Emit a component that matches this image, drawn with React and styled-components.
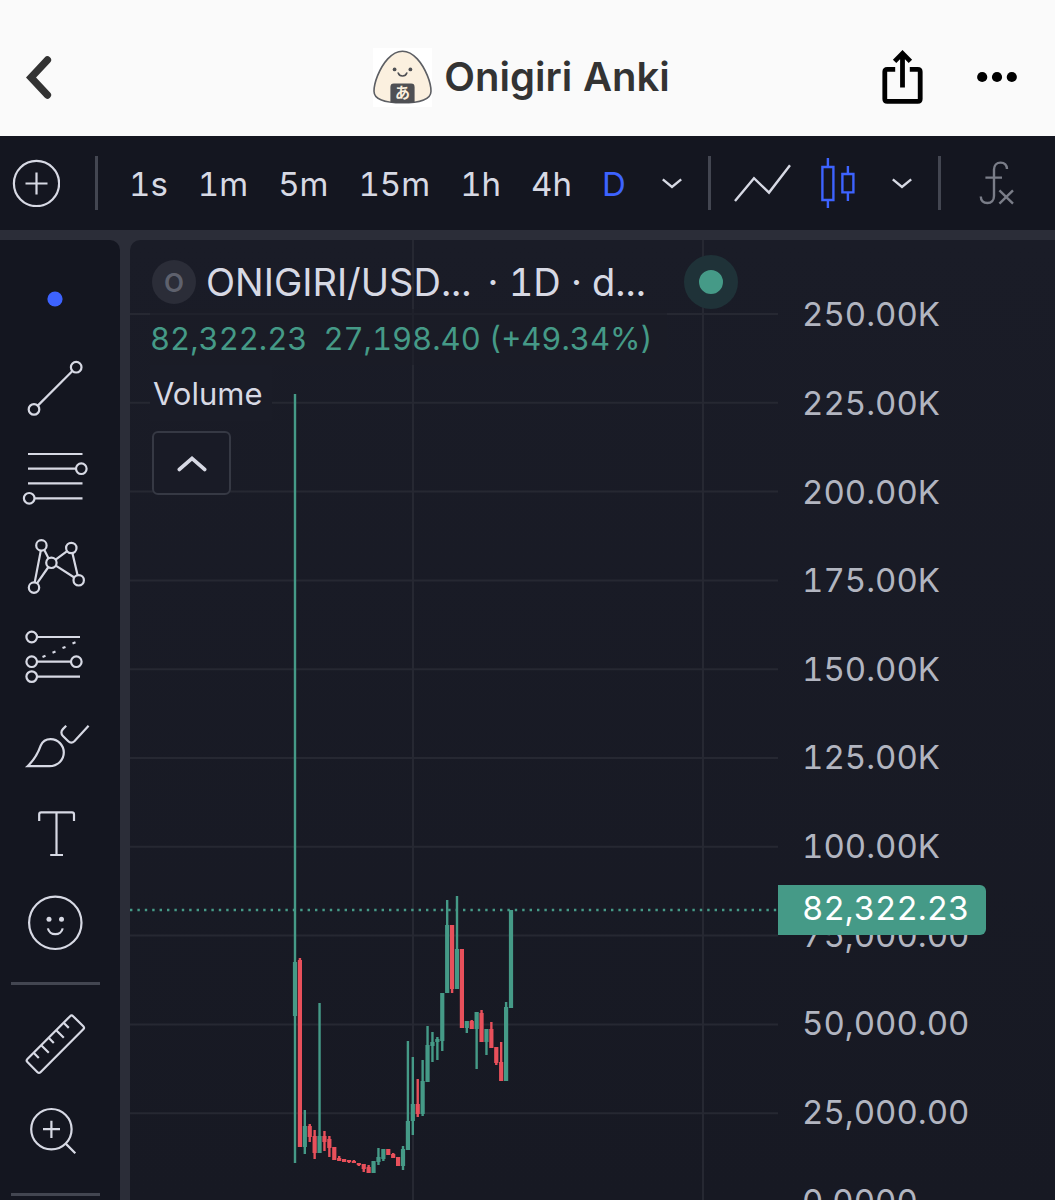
import styled, { createGlobalStyle } from "styled-components";

const colors = {
  page: "#fafafa",
  toolbar: "#141620",
  frame: "#2b2d38",
  text: "#d7d9e4",
  axis: "#b2b5c0",
  muted: "#7a7d88",
  line: "#434651",
  blue: "#3d63ff",
  green: "#459a87",
  red: "#e8505b",
};

const GRID_TOP = 74;
const GRID_STEP = 89;
const CANDLE_START = 165;
const CANDLE_END = 381;
const LAST_PRICE_Y = 670;

const intervals = ["1s", "1m", "5m", "15m", "1h", "4h", "D"];

const priceLabels = [
  "250.00K",
  "225.00K",
  "200.00K",
  "175.00K",
  "150.00K",
  "125.00K",
  "100.00K",
  "75,000.00",
  "50,000.00",
  "25,000.00",
  "0.0000",
];

// [direction, high, body top, body bottom, low]
const candles = [
  ["up", 154, 722, 776, 923],
  ["down", 718, 720, 907, 907],
  ["up", 870, 886, 907, 914],
  ["down", 884, 886, 897, 902],
  ["down", 890, 896, 913, 919],
  ["up", 763, 896, 913, 913],
  ["down", 891, 896, 902, 911],
  ["down", 896, 899, 908, 917],
  ["down", 907, 907, 920, 920],
  ["down", 916, 918, 921, 921],
  ["down", 919, 919, 922, 922],
  ["down", 920, 920, 922, 923],
  ["down", 920, 921, 923, 923],
  ["down", 923, 923, 925, 926],
  ["down", 924, 924, 929, 932],
  ["down", 925, 927, 933, 933],
  ["up", 921, 921, 933, 933],
  ["up", 908, 917, 922, 925],
  ["up", 909, 909, 919, 921],
  ["down", 909, 909, 915, 915],
  ["down", 913, 914, 918, 918],
  ["down", 917, 917, 926, 926],
  ["up", 906, 909, 926, 930],
  ["up", 801, 881, 910, 910],
  ["up", 817, 864, 881, 895],
  ["down", 839, 864, 874, 877],
  ["up", 820, 841, 874, 876],
  ["up", 786, 805, 842, 842],
  ["up", 792, 802, 806, 822],
  ["up", 797, 799, 802, 820],
  ["up", 753, 753, 801, 811],
  ["up", 660, 685, 753, 753],
  ["down", 685, 685, 749, 753],
  ["up", 656, 709, 749, 749],
  ["down", 709, 709, 788, 788],
  ["up", 781, 781, 788, 793],
  ["down", 780, 781, 789, 789],
  ["up", 772, 772, 789, 829],
  ["down", 770, 773, 802, 802],
  ["up", 789, 789, 802, 815],
  ["down", 782, 789, 808, 808],
  ["down", 807, 807, 823, 825],
  ["down", 802, 822, 841, 841],
  ["up", 762, 767, 841, 841],
  ["up", 670, 670, 768, 768],
];

const drawingTools = [
  {
    label: "Cursor",
    icon: <circle cx="55" cy="44" r="7.6" fill={colors.blue} stroke="none" />,
  },
  {
    label: "Trend line",
    icon: (
      <>
        <circle cx="76.2" cy="23.2" r="5.3" />
        <circle cx="34" cy="65.4" r="5.3" />
        <path d="M72.4 27 37.8 61.6" />
      </>
    ),
  },
  {
    label: "Fib retracement",
    icon: (
      <>
        <path d="M28 21H82.5M28 35.7H76M28 50.4H82.5M34.5 65.3H82.5" />
        <circle cx="81.3" cy="35.7" r="5.3" />
        <circle cx="29.2" cy="65.3" r="5.3" />
      </>
    ),
  },
  {
    label: "Pattern",
    icon: (
      <>
        <circle cx="41.4" cy="23.4" r="5.2" />
        <circle cx="71.3" cy="26" r="5.2" />
        <circle cx="51.4" cy="40.8" r="5.2" />
        <circle cx="78.7" cy="58.3" r="5.2" />
        <circle cx="34" cy="65.6" r="5.2" />
        <path d="M40.8 28.6 34.7 60.4M44.2 27.8 48.6 36.4M48.4 45 37 61.3M55.6 37.7 67.1 29.1M72.4 31.1 77.6 53.2M55.8 43.6 74.3 55.5" />
      </>
    ),
  },
  {
    label: "Forecast",
    icon: (
      <>
        <path d="M37 26H80M37 50.7H71M37 65.6H80" />
        <circle cx="31.7" cy="26" r="5.3" />
        <circle cx="31.7" cy="50.7" r="5.3" />
        <circle cx="76.3" cy="50.7" r="5.3" />
        <circle cx="31.7" cy="65.6" r="5.3" />
        <path d="M42.5 46 45.5 44.8M52.5 41.7 55.5 40.5M62.5 37.1 65.5 35.9M72.5 32.5 75.5 31.3" />
      </>
    ),
  },
  {
    label: "Brush",
    icon: (
      <>
        <path d="M27.6 66.2H49.5C57.5 66.2 63.8 60.2 63.8 52.6 63.8 45.2 58 39.2 50.6 39.2 46 39.2 42.4 41.6 40.6 45.8 37.8 53.6 34 60 27.6 66.2Z" />
        <path d="M66.2 25.8 62.9 29.1C60.9 31.1 60.9 34 62.9 36L68 41C70 43 72.6 43 74.6 41L88.6 25.8" />
      </>
    ),
  },
  {
    label: "Text",
    icon: <path d="M39.2 32V25.4Q39.2 23.4 41.2 23.4H72Q74 23.4 74 25.4V32M56.5 23.4V66M50.2 66H63" />,
  },
  {
    label: "Emoji",
    icon: (
      <>
        <circle cx="55.3" cy="44.8" r="26.2" />
        <circle cx="49" cy="41.2" r="2.5" fill={colors.text} stroke="none" />
        <circle cx="61.5" cy="41.2" r="2.5" fill={colors.text} stroke="none" />
        <path d="M47.9 50.4C48.6 53.8 51.6 56.2 55.3 56.2 59 56.2 62 53.8 62.7 50.4" />
      </>
    ),
  },
];

const measureTools = [
  {
    label: "Measure",
    icon: (
      <>
        <path d="M70.1 16.2Q71.6 14.7 73.1 16.2L83.3 26.2Q84.8 27.7 83.3 29.2L40.5 72.2Q39 73.7 37.5 72.2L27.4 62Q25.9 60.5 27.4 59Z" />
        <path d="M33.6 52.8 38.8 58M41.2 45.2 48.8 52.8M48.6 37.8 53.8 43M56.2 30.2 63.8 37.8M63.6 22.7 68.8 27.9" />
      </>
    ),
  },
  {
    label: "Zoom in",
    icon: (
      <>
        <circle cx="51.4" cy="40.2" r="20.2" />
        <path d="M43 40.2H60M51.4 31.7V48.9M65.7 54.6 75.3 64.2" />
      </>
    ),
  },
];

const BackIcon = () => (
  <svg width="26" height="43" viewBox="0 0 26 43" fill="none" aria-hidden="true">
    <path d="M21.4 4 5 21.5 21.4 39" stroke="#333" strokeWidth="7.4" strokeLinecap="round" />
  </svg>
);

const ShareIcon = () => (
  <svg width="41" height="54" viewBox="0 0 41 54" fill="none" stroke="#000" strokeWidth="4.8" aria-hidden="true">
    <path d="M13.2 19.4H5.2Q2.8 19.4 2.8 21.8V49Q2.8 51.4 5.2 51.4H35.8Q38.2 51.4 38.2 49V21.8Q38.2 19.4 35.8 19.4H27.8" />
    <path d="M20.5 37.4V4M12.6 11.4 20.5 3.4 28.4 11.4" />
  </svg>
);

const MoreIcon = () => (
  <svg width="40" height="12" viewBox="0 0 40 12" aria-hidden="true">
    <circle cx="5.2" cy="6" r="5.1" />
    <circle cx="20" cy="6" r="5.1" />
    <circle cx="34.8" cy="6" r="5.1" />
  </svg>
);

const OnigiriLogo = () => (
  <svg width="59" height="59" viewBox="0 0 59 59" aria-hidden="true">
    <rect width="59" height="59" fill="#fff" />
    <path
      d="M29.5 3.2C18.4 3.2 9.6 15.6 4.6 27.6 2.4 33 1 38.6 1 43.2 1 51.8 12.6 54.8 29.5 54.8S58 51.8 58 43.2C58 38.6 56.6 33 54.4 27.6 49.4 15.6 40.6 3.2 29.5 3.2Z"
      fill="#fbf0df"
      stroke="#5d5f64"
      strokeWidth="1.6"
    />
    <path d="M17.4 54.4V39Q17.4 35.6 20.8 35.6H38.2Q41.6 35.6 41.6 39V54.4Q29.5 55.4 17.4 54.4Z" fill="#4f5054" />
    <circle cx="21.6" cy="21.4" r="1.9" fill="#4f5054" />
    <circle cx="37.4" cy="21.4" r="1.9" fill="#4f5054" />
    <path d="M25.2 25C26.4 29 32.6 29 33.8 25" fill="none" stroke="#4f5054" strokeWidth="1.6" strokeLinecap="round" />
    <LogoText x="29.5" y="50">
      あ
    </LogoText>
  </svg>
);

const AddIcon = () => (
  <svg width="48" height="48" viewBox="0 0 48 48" fill="none" stroke="currentColor" strokeWidth="2.2" aria-hidden="true">
    <circle cx="24.5" cy="24.5" r="22.6" />
    <path d="M13.5 24.5H35.5M24.5 13.5V35.5" />
  </svg>
);

const ChevronIcon = () => (
  <svg width="20" height="11" viewBox="0 0 20 11" fill="none" stroke="currentColor" strokeWidth="2.4" aria-hidden="true">
    <path d="M.8 1.4 10 9 19.2 1.4" />
  </svg>
);

const LineChartIcon = () => (
  <svg width="57" height="38" viewBox="0 0 57 38" fill="none" stroke="currentColor" strokeWidth="2.4" aria-hidden="true">
    <path d="M1 37 20 14.2 35 28.6 56 1.2" />
  </svg>
);

const CandlesIcon = () => (
  <svg width="36" height="50" viewBox="0 0 36 50" fill="none" stroke="currentColor" strokeWidth="2.4" aria-hidden="true">
    <path d="M2.4 9H13.4V42H2.4ZM7.9 0V9M7.9 42V50" />
    <path d="M22.4 16H33.4V34.4H22.4ZM27.9 8V16M27.9 34.4V43" />
  </svg>
);

const FxIcon = () => (
  <svg width="36" height="44" viewBox="0 0 36 44" fill="none" stroke="currentColor" strokeWidth="2.4" aria-hidden="true">
    <path d="M28 8C28 4 25.6 1.6 21.6 1.6 17.6 1.6 15 4.4 15 8.6V35C15 39.4 12.4 42 8.4 42 4.4 42 1.8 39.6 1.8 35.4M6.4 16.6H23" />
    <path d="M20.4 29.4 34 42.6M34 29.4 20.4 42.6" />
  </svg>
);

const CollapseIcon = () => (
  <svg width="30" height="17" viewBox="0 0 30 17" fill="none" aria-hidden="true">
    <path d="M2.4 14.4 15 3.4 27.6 14.4" stroke={colors.text} strokeWidth="3.8" strokeLinecap="round" />
  </svg>
);

const ToolIcon = ({ children }) => (
  <svg width="110" height="89" viewBox="0 0 110 89" fill="none" stroke={colors.text} strokeWidth="2.2" aria-hidden="true">
    {children}
  </svg>
);

const CandleChart = () => {
  const step = (CANDLE_END - CANDLE_START) / (candles.length - 1);
  return (
    <ChartSvg role="img" aria-label="ONIGIRI/USD daily candles">
      {priceLabels.map((label, i) => {
        const y = GRID_TOP + i * (GRID_STEP - 0.2);
        return <GridLine key={label} x1="0" x2="100%" y1={y} y2={y} />;
      })}
      <GridLine x1="283" x2="283" y1="0" y2="100%" />
      <GridLine x1="573" x2="573" y1="0" y2="100%" />
      <LastPriceLine x1="0" x2="100%" y1={LAST_PRICE_Y} y2={LAST_PRICE_Y} />
      {candles.map(([direction, high, top, bottom, low], i) => {
        const x = CANDLE_START + i * step;
        return (
          <g key={i} fill={direction === "up" ? colors.green : colors.red}>
            <rect x={x - 1.2} y={high} width="2.4" height={low - high} />
            <rect x={x - 2.1} y={top} width="4.2" height={bottom - top} />
          </g>
        );
      })}
    </ChartSvg>
  );
};

const App = () => {
  return (
    <Page>
      <GlobalStyle />
      <Header>
        <BackButton type="button" aria-label="Back">
          <BackIcon />
        </BackButton>
        <Brand>
          <OnigiriLogo />
          <BrandName>Onigiri Anki</BrandName>
        </Brand>
        <HeaderActions>
          <IconButton type="button" aria-label="Share">
            <ShareIcon />
          </IconButton>
          <IconButton type="button" aria-label="More">
            <MoreIcon />
          </IconButton>
        </HeaderActions>
      </Header>

      <Toolbar>
        <IconButton type="button" aria-label="Add symbol">
          <AddIcon />
        </IconButton>
        <ToolbarDivider />
        <Intervals>
          {intervals.map(interval => (
            <IntervalButton key={interval} type="button" $active={interval === "D"}>
              {interval}
            </IntervalButton>
          ))}
        </Intervals>
        <MenuButton type="button" aria-label="More intervals">
          <ChevronIcon />
        </MenuButton>
        <ToolbarDivider />
        <ChartTypes>
          <IconButton type="button" aria-label="Line">
            <LineChartIcon />
          </IconButton>
          <IconButton type="button" aria-label="Candles" $active>
            <CandlesIcon />
          </IconButton>
        </ChartTypes>
        <MenuButton type="button" aria-label="More chart types">
          <ChevronIcon />
        </MenuButton>
        <ToolbarDivider />
        <IndicatorButton type="button" aria-label="Indicators">
          <FxIcon />
        </IndicatorButton>
      </Toolbar>

      <Workspace>
        <Sidebar>
          {drawingTools.map(tool => (
            <ToolButton key={tool.label} type="button" aria-label={tool.label}>
              <ToolIcon>{tool.icon}</ToolIcon>
            </ToolButton>
          ))}
          <SidebarDivider />
          {measureTools.map(tool => (
            <ToolButton key={tool.label} type="button" aria-label={tool.label}>
              <ToolIcon>{tool.icon}</ToolIcon>
            </ToolButton>
          ))}
          <SidebarDivider />
        </Sidebar>

        <ChartPanel>
          <Plot>
            <CandleChart />
            <Legend>
              <SymbolRow>
                <SymbolBadge>O</SymbolBadge>
                <SymbolName>ONIGIRI/USD...</SymbolName>
                <SymbolMeta>· 1D · d...</SymbolMeta>
                <MarketStatus />
              </SymbolRow>
              <PriceRow>
                <span>82,322.23</span>
                <span>27,198.40 (+49.34%)</span>
              </PriceRow>
              <VolumeRow>Volume</VolumeRow>
              <CollapseButton type="button" aria-label="Collapse legend">
                <CollapseIcon />
              </CollapseButton>
            </Legend>
          </Plot>
          <PriceAxis>
            {priceLabels.map(label => (
              <AxisLabel key={label}>{label}</AxisLabel>
            ))}
            <LastPrice>82,322.23</LastPrice>
          </PriceAxis>
        </ChartPanel>
      </Workspace>
    </Page>
  );
};

const GlobalStyle = createGlobalStyle`
  * {
    box-sizing: border-box;
  }
  body {
    margin: 0;
    font-family: Inter, "Liberation Sans", sans-serif;
    font-variant-numeric: tabular-nums;
    background: ${colors.toolbar};
  }
  button {
    padding: 0;
    border: 0;
    background: none;
    color: inherit;
    font: inherit;
    font-variant-numeric: inherit;
    cursor: pointer;
  }
  svg {
    display: block;
  }
`;

const Page = styled.div`
  display: flex;
  flex-direction: column;
  height: 100vh;
  overflow: hidden;
  color: ${colors.text};
`;

const Header = styled.header`
  flex: none;
  display: grid;
  grid-template-columns: 1fr auto 1fr;
  align-items: center;
  height: 136px;
  padding: 18px 38px 0 26px;
  background: ${colors.page};
`;

const BackButton = styled.button`
  justify-self: start;
`;

const Brand = styled.div`
  display: flex;
  align-items: center;
  gap: 12px;
`;

const BrandName = styled.h1`
  margin: 0;
  font-size: 40px;
  font-weight: 600;
  line-height: 48px;
  color: #333;
`;

const LogoText = styled.text`
  font-family: "Noto Sans CJK JP", sans-serif;
  font-size: 15px;
  font-weight: 700;
  text-anchor: middle;
  fill: #fbf0df;
`;

const HeaderActions = styled.div`
  justify-self: end;
  display: flex;
  align-items: center;
  gap: 54px;
`;

const IconButton = styled.button`
  flex: none;
  color: ${props => (props.$active ? colors.blue : colors.text)};
`;

const Toolbar = styled.div`
  flex: none;
  display: flex;
  align-items: center;
  height: 94px;
  padding: 0 12px;
  overflow: hidden;
  background: ${colors.toolbar};
`;

const ToolbarDivider = styled.div`
  flex: none;
  width: 3px;
  height: 54px;
  background: ${colors.line};

  ${IconButton} + & {
    margin: 0 31px 0 35px;
  }
`;

const Intervals = styled.div`
  display: flex;
  gap: 30px;
`;

const IntervalButton = styled.button`
  padding-top: 2px;
  font-size: 33px;
  line-height: 40px;
  color: ${props => (props.$active ? colors.blue : colors.text)};
`;

const MenuButton = styled.button`
  flex: none;
  display: flex;
  align-items: center;
  justify-content: center;
  width: 82px;
  height: 54px;
  padding-left: 11px;
`;

const ChartTypes = styled.div`
  display: flex;
  align-items: center;
  gap: 29px;
  margin-left: 23px;
`;

const IndicatorButton = styled.button`
  flex: none;
  margin-left: 38px;
  color: ${colors.muted};
`;

const Workspace = styled.div`
  flex: 1;
  display: flex;
  gap: 10px;
  min-height: 0;
  padding-top: 10px;
  overflow: hidden;
  background: ${colors.frame};
`;

const Sidebar = styled.div`
  flex: none;
  display: flex;
  flex-direction: column;
  width: 120px;
  padding: 15px 10px 0 0;
  border-radius: 0 10px 0 0;
  overflow: hidden;
  background: ${colors.toolbar};
`;

const ToolButton = styled.button`
  flex: none;
  height: 89px;
`;

const SidebarDivider = styled.div`
  flex: none;
  height: 3px;
  margin: 15px 10px 15px 11px;
  background: ${colors.line};
`;

const ChartPanel = styled.div`
  flex: 1;
  display: flex;
  min-width: 0;
  border-radius: 10px 0 0 0;
  overflow: hidden;
  background: linear-gradient(#1a1c27, #171923);
`;

const Plot = styled.div`
  position: relative;
  flex: 1;
  min-width: 0;
`;

const ChartSvg = styled.svg`
  width: 100%;
  height: 100%;
`;

const GridLine = styled.line`
  stroke: #262832;
  stroke-width: 2;
`;

const LastPriceLine = styled.line`
  stroke: ${colors.green};
  stroke-width: 2.4;
  stroke-dasharray: 2.4 5;
`;

const Legend = styled.div`
  position: absolute;
  top: 15px;
  left: 20px;
`;

const SymbolRow = styled.div`
  display: flex;
  align-items: center;
  height: 54px;
  font-size: 38px;
  white-space: nowrap;
`;

const SymbolBadge = styled.div`
  flex: none;
  display: flex;
  align-items: center;
  justify-content: center;
  width: 44px;
  height: 44px;
  margin: 0 10px 0 2px;
  border-radius: 50%;
  font-size: 26px;
  font-weight: 600;
  color: #5e616d;
  background: ${colors.frame};
`;

const SymbolName = styled.span`
  margin-right: 16px;
`;

const SymbolMeta = styled.span`
  margin-right: 38px;
`;

const MarketStatus = styled.div`
  flex: none;
  width: 54px;
  height: 54px;
  border: 15px solid #1f3238;
  border-radius: 50%;
  background: ${colors.green};
`;

const PriceRow = styled.div`
  display: flex;
  gap: 16px;
  width: max-content;
  padding: 10px 14px 6px 0;
  font-size: 31px;
  line-height: 40px;
  color: ${colors.green};
  background: rgba(26, 28, 39, 0.6);
`;

const VolumeRow = styled.div`
  width: max-content;
  padding: 2px 10px 0 3px;
  font-size: 31px;
  line-height: 54px;
  background: #1a1c27;
`;

const CollapseButton = styled.button`
  display: flex;
  align-items: center;
  justify-content: center;
  width: 79px;
  height: 64px;
  margin: 10px 2px;
  border: 2px solid #363944;
  border-radius: 6px;
  background: #191b26;
`;

const PriceAxis = styled.div`
  position: relative;
  flex: none;
  display: grid;
  grid-template-rows: repeat(11, 1fr);
  width: 277px;
  height: 975px;
  padding-left: 24px;
  margin-top: 30px;
`;

const AxisLabel = styled.div`
  display: flex;
  align-items: center;
  font-size: 33px;
  color: ${colors.axis};
`;

const LastPrice = styled.div`
  position: absolute;
  top: 615px;
  left: 0;
  width: 208px;
  padding: 0 0 4px 24px;
  border-radius: 0 6px 6px 0;
  font-size: 33px;
  line-height: 46px;
  color: #fff;
  background: ${colors.green};
`;

export default App;
